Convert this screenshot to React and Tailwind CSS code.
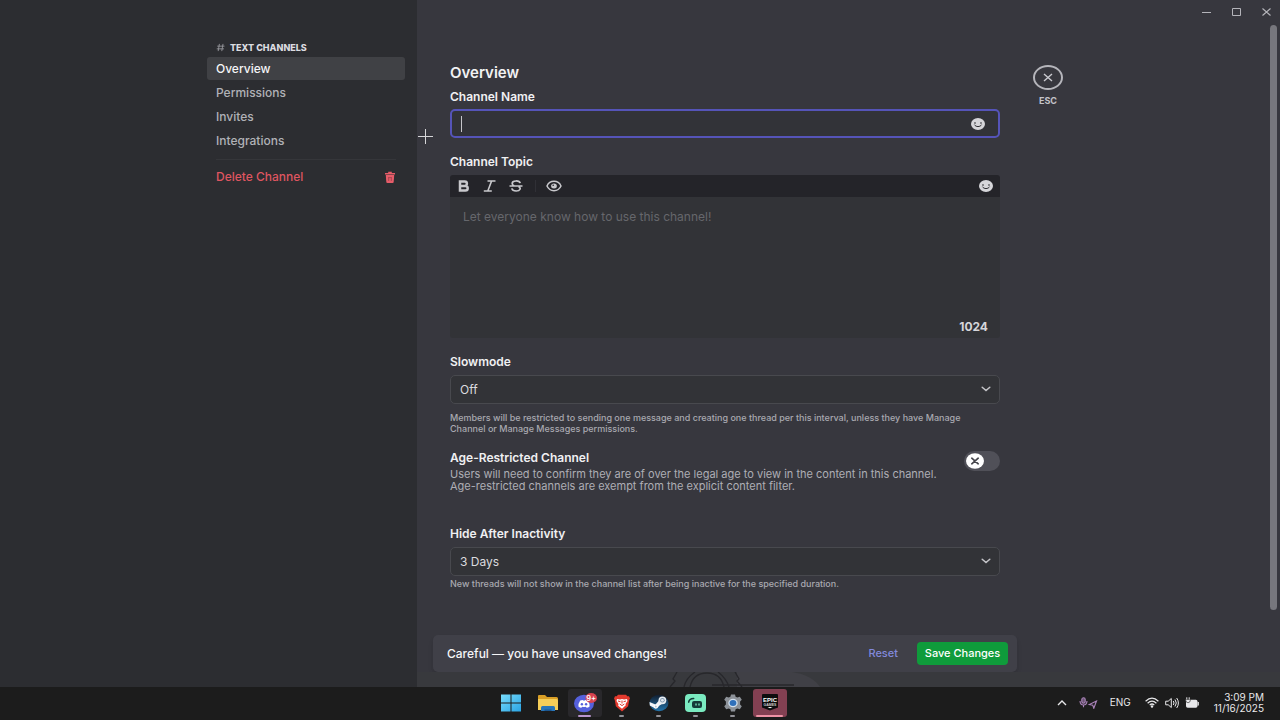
import React, { useState } from "react";

function Smiley() {
  return (
    <svg viewBox="0 0 14 12" className="h-3 w-3.5" aria-hidden="true">
      <ellipse cx="7" cy="6" rx="7" ry="6" fill="#d6d6da" />
      <ellipse cx="4" cy="5" rx="0.9" ry="0.7" fill="#303035" />
      <ellipse cx="10" cy="5" rx="0.9" ry="0.7" fill="#303035" />
      <path d="M3.6 7c1.200 2.200 5.600 2.200 6.800 0" fill="none" stroke="#303035" strokeWidth="1" strokeLinecap="round" />
    </svg>
  );
}

function Chevron() {
  return (
    <svg viewBox="0 0 10 6" className="pointer-events-none absolute right-[9px] top-[11px] h-1.5 w-2.5" aria-hidden="true">
      <path d="M1.2 1.2 5 4.6 8.8 1.2" fill="none" stroke="#c4c4c8" strokeWidth="1.5" strokeLinecap="round" />
    </svg>
  );
}

function Sidebar() {
  const link = "flex h-[23px] items-center rounded-[3px] px-[9px] text-xs font-medium";
  return (
    <aside className="flex w-[417px] shrink-0 justify-end bg-[#2c2d31] pr-3 pt-[41px]">
      <nav className="w-[198px]">
        <h2 className="flex h-[13px] items-center gap-[5px] pl-[9px] text-[9px] font-extrabold text-[#dcdce0]">
          <svg viewBox="0 0 10 10" className="size-[9px]" aria-hidden="true">
            <path d="M3.8 1 2.4 9M7.8 1 6.4 9M1.4 3.5h8M.8 6.5h8" fill="none" stroke="#97979d" strokeWidth="1" />
          </svg>
          TEXT CHANNELS
        </h2>
        <ul className="mt-[3px] flex flex-col gap-px text-[#b1b2b7]">
          <li><a href="#overview" className={link + " bg-[#404145] text-[#f5f5f7]"}>Overview</a></li>
          <li><a href="#permissions" className={link}>Permissions</a></li>
          <li><a href="#invites" className={link}>Invites</a></li>
          <li><a href="#integrations" className={link}>Integrations</a></li>
        </ul>
        <hr className="mx-[9px] mb-[5px] mt-[7px] border-[#35363a]" />
        <button type="button" className="flex h-[23px] w-full items-center justify-between px-[9px] text-xs font-medium text-[#df5560]">
          Delete Channel
          <svg viewBox="0 0 12 12" className="size-3" aria-hidden="true">
            <path d="M4.2.8h3.6v1.1H11v1.5H1V1.9h3.2z" fill="#e65c69" />
            <path d="M1.8 4h8.4l-.5 7q-.1 1-1 1H3.3q-.9 0-1-1z" fill="#e65c69" />
            <path d="M4.7 6v4M7.3 6v4M4.7 6.6h2.6" stroke="#a3434e" strokeWidth="0.9" />
          </svg>
        </button>
      </nav>
    </aside>
  );
}

function SelectField({ id, label, options }) {
  return (
    <>
      <label htmlFor={id} className="block text-xs leading-4 font-semibold text-[#f0f0f2]">{label}</label>
      <div className="relative mt-[5px]">
        <select id={id} className="block h-[29px] w-full appearance-none rounded-[5px] border border-[#48494e] bg-[#323337] px-[9px] text-xs text-[#dbdbdf] outline-none">
          {options.map((o) => <option key={o}>{o}</option>)}
        </select>
        <Chevron />
      </div>
    </>
  );
}

function Toolbar() {
  return (
    <div className="flex h-[22px] items-center rounded-t-[3px] bg-[#242429] px-[7px]">
      <button type="button" aria-label="Bold" className="flex w-[13px] justify-center">
        <svg viewBox="0 0 12 12" className="size-3"><path d="M2 1.500h4.700a2.200 2.200 0 0 1 0 4.400H2zM2 5.900h5.400a2.300 2.300 0 0 1 0 4.600H2z" fill="none" stroke="#c8c8cc" strokeWidth="2.500" /></svg>
      </button>
      <button type="button" aria-label="Italic" className="ml-[13px] flex w-[13px] justify-center">
        <svg viewBox="0 0 13 12" className="h-3 w-[13px]"><path d="M4.5 1h8M.8 11h8M8.6 1 4.8 11" fill="none" stroke="#c8c8cc" strokeWidth="1.6" /></svg>
      </button>
      <button type="button" aria-label="Strikethrough" className="ml-[13px] flex w-3.5 justify-center">
        <svg viewBox="0 0 14 12" className="h-3 w-3.5"><path d="M11.2 3.2C10.6.2 3.2.2 3.2 3.4c0 1 .7 1.9 2 2.3M.5 6h13M9.5 6.6c3 1.2 1.8 4.4-2.3 4.4-2.4 0-4-1-4.4-2.6" fill="none" stroke="#c8c8cc" strokeWidth="1.7" /></svg>
      </button>
      <span className="ml-3 h-3 w-px bg-[#303036]" />
      <button type="button" aria-label="Preview" className="ml-2.5 flex">
        <svg viewBox="0 0 16 12" className="h-3 w-4"><path d="M1 6c2.800-6.200 11.200-6.200 14 0-2.800 6.200-11.200 6.200-14 0z" fill="none" stroke="#c8c8cc" strokeWidth="1.500" /><ellipse cx="8" cy="6" rx="2.900" ry="2.500" fill="#c8c8cc" /><circle cx="7.200" cy="5.200" r=".8" fill="#242429" /></svg>
      </button>
      <button type="button" aria-label="Add emoji to topic" className="ml-auto"><Smiley /></button>
    </div>
  );
}

function Settings() {
  const [name, setName] = useState("");
  const [restricted, setRestricted] = useState(false);
  return (
    <form className="w-full max-w-[550px] pt-[39px]" onSubmit={(e) => e.preventDefault()}>
      <h1 className="text-[15px] leading-[18px] font-semibold text-[#f2f2f4]">Overview</h1>
      <label htmlFor="name" className="mt-[7px] block text-xs leading-4 font-semibold text-[#f0f0f2]">Channel Name</label>
      <div className="relative mt-1 flex h-[29px] items-center rounded-[5px] border-2 border-[#5554b8] bg-[#323338] pl-[9px] pr-[13px]">
        <span className="absolute left-[9px] top-[5px] h-4 w-px bg-[#c6c6ca]" />
        <input id="name" value={name} onChange={(e) => setName(e.target.value)} className="h-full min-w-0 flex-1 bg-transparent text-xs text-white caret-transparent outline-none" />
        <button type="button" aria-label="Add emoji to name"><Smiley /></button>
      </div>
      <label htmlFor="topic" className="mt-4 block text-xs leading-4 font-semibold text-[#f0f0f2]">Channel Topic</label>
      <div className="mt-[5px]">
        <Toolbar />
        <div className="flex h-[141px] flex-col rounded-b-[3px] bg-[#323337] pb-[5px]">
          <textarea id="topic" placeholder="Let everyone know how to use this channel!" className="flex-1 resize-none bg-transparent px-[13px] pt-3 text-xs leading-4 text-[#dbdbdf] outline-none placeholder:text-[#66676c]" />
          <span className="self-end pr-3 text-xs leading-3 font-bold text-[#d6d6da]">1024</span>
        </div>
      </div>
      <div className="mt-4">
        <SelectField id="slow" label="Slowmode" options={["Off", "5 seconds", "10 seconds"]} />
        <p className="mt-2 max-w-[520px] text-[9px] leading-[11px] font-medium text-[#a9a9b0]">
          Members will be restricted to sending one message and creating one thread per this interval, unless they have Manage Channel or Manage Messages permissions.
        </p>
      </div>
      <div className="mt-4 flex items-start justify-between">
        <div>
          <label htmlFor="age" className="block text-xs leading-4 font-semibold text-[#f0f0f2]">Age-Restricted Channel</label>
          <p className="mt-0.5 max-w-[495px] text-[11px] leading-3 text-[#aeaeb5]">
            Users will need to confirm they are of over the legal age to view in the content in this channel. Age-restricted channels are exempt from the explicit content filter.
          </p>
        </div>
        <label className="mt-px flex h-5 w-9 items-center rounded-full bg-[#505058] px-0.5 has-[:checked]:justify-end has-[:checked]:bg-[#0f9b3b]">
          <input id="age" type="checkbox" role="switch" checked={restricted} onChange={(e) => setRestricted(e.target.checked)} className="sr-only" />
          <svg viewBox="0 0 18 16" className="h-4 w-[18px]" aria-hidden="true">
            <ellipse cx="9" cy="8" rx="9" ry="7.8" fill="#fff" />
            <path d="m5.8 5.2 6.4 5.6m0-5.6-6.4 5.6" stroke="#46464c" strokeWidth="1.7" strokeLinecap="round" />
          </svg>
        </label>
      </div>
      <div className="mt-[34px]">
        <SelectField id="hide" label="Hide After Inactivity" options={["3 Days", "1 Week", "1 Hour"]} />
        <p className="mt-0.5 text-[9px] leading-[11px] font-medium text-[#a9a9b0]">
          New threads will not show in the channel list after being inactive for the specified duration.
        </p>
      </div>
    </form>
  );
}

function WindowControls() {
  return (
    <div className="flex h-[25px] items-center justify-end gap-[19px] pb-0.5 pr-2 text-[#b4b4ba]">
      <button type="button" aria-label="Minimize"><svg viewBox="0 0 11 10" className="h-2.5 w-[11px]"><path d="M1 5.5h9" stroke="currentColor" strokeWidth="1" /></svg></button>
      <button type="button" aria-label="Maximize"><svg viewBox="0 0 11 10" className="h-2.5 w-[11px]"><path d="M1.5 1.5h8v7h-8z" fill="none" stroke="currentColor" strokeWidth="1" /></svg></button>
      <button type="button" aria-label="Close window"><svg viewBox="0 0 11 10" className="h-2.5 w-[11px]"><path d="m1.5 1.5 8 7m0-7-8 7" stroke="currentColor" strokeWidth="1.1" /></svg></button>
    </div>
  );
}

function UnsavedBar() {
  return (
    <div className="ml-4 flex h-[37px] max-w-[584px] items-center rounded-[5px] bg-[#404048] pl-3.5 pr-[9px] shadow-md">
      <span className="flex-1 text-xs font-medium text-[#f6f6f8]">Careful — you have unsaved changes!</span>
      <button type="button" className="mr-[19px] text-[11px] font-medium text-[#8289dc]">Reset</button>
      <button type="button" className="h-[23px] w-[91px] rounded-[4px] bg-[#0f9b3b] text-[11px] font-medium text-white">Save Changes</button>
    </div>
  );
}

function Task({ name, slot = "", mark = "", children }) {
  return (
    <button type="button" aria-label={name} className={"relative flex h-7 w-[34px] items-center justify-center rounded-[3px] " + slot}>
      {children}
      <span className={"absolute bottom-0 h-0.5 rounded-full " + mark} />
    </button>
  );
}

function Taskbar() {
  const dot = "w-[5px] bg-[#929298]";
  return (
    <footer className="grid h-[33px] grid-cols-[1fr_auto_1fr] items-center bg-[#1c1c1c] pb-0.5">
      <div className="col-start-2 flex gap-[3px]">
        <Task name="Start">
          <svg viewBox="0 0 20 18" className="h-[18px] w-5">
            <defs><linearGradient id="win" x2="1" y2="1"><stop stopColor="#78dcfb" /><stop offset="1" stopColor="#2aa4e4" /></linearGradient></defs>
            <path d="M0 .5h9.5v8H0zM10.5.5H20v8h-9.5zM0 9.5h9.5v8H0zM10.5 9.5H20v8h-9.5z" fill="url(#win)" />
          </svg>
        </Task>
        <Task name="File Explorer">
          <svg viewBox="0 0 22 18" className="h-[18px] w-[22px]">
            <path d="M1 2q0-1 1-1h6l2 2h9.500q1.500 0 1.500 1.500V9H1z" fill="#d99f26" />
            <path d="M1 5h18.500q1.500 0 1.500 1.500V16H1z" fill="#f5ce58" />
            <path d="M4 17v-3.500Q4 12 5.500 12h11q1.500 0 1.500 1.500V17z" fill="#2875b8" />
            <path d="M7.500 17v-1.500h7V17" fill="#1b568f" />
          </svg>
        </Task>
        <Task name="Discord" slot="bg-[#29282b]" mark="w-[13px] bg-[#b995ce]">
          <svg viewBox="0 0 24 20" className="h-5 w-6">
            <ellipse cx="11" cy="10.500" rx="10" ry="8.700" fill="#5560dc" />
            <path d="M7.200 7.600q1.200-.7 2.500-.7l.4.7h1.800l.4-.7q1.300 0 2.500.7 2 3 1.800 6-1.500 1.200-3 1.200l-.7-1q-1.900.4-3.800 0l-.7 1q-1.500 0-3-1.200-.2-3 1.800-6z" fill="#fff" />
            <ellipse cx="8.900" cy="11.200" rx="1.200" ry="1.300" fill="#5560dc" /><ellipse cx="13.100" cy="11.200" rx="1.200" ry="1.300" fill="#5560dc" />
            <ellipse cx="18.200" cy="5" rx="5.800" ry="5" fill="#d8434f" />
            <text x="18.200" y="7.700" textAnchor="middle" fontSize="7.500" fontWeight="600" fill="#fff" fontFamily="Inter, sans-serif">9+</text>
          </svg>
        </Task>
        <Task name="Brave" mark={dot}>
          <svg viewBox="0 0 18 18" className="size-[18px]">
            <path d="M5 .7h8l1.300 1.600 1.700-.1 1 2.200-.7 1.400-1.200 6.400L9 17.500l-6.100-5.300L1.700 5.800 1 4.400l1-2.200 1.700.1z" fill="#e33a2e" />
            <path d="m4 5 3 .5L9 5l2 .5 3-.5.5 2-2 3 .3 1.300L9 14.800l-3.800-3L5.500 10l-2-3z" fill="#fff" />
            <path d="m5 7 2.500.7M13 7l-2.500.7M9 6.500v3M6.700 10 9 11.600l2.300-1.600" fill="none" stroke="#df3b2f" strokeWidth="1" />
          </svg>
        </Task>
        <Task name="Steam" mark={dot}>
          <svg viewBox="0 0 20 18" className="h-[18px] w-5">
            <defs><linearGradient id="stm" x2="0" y2="1"><stop stopColor="#111d2e" /><stop offset="1" stopColor="#2375ac" /></linearGradient></defs>
            <ellipse cx="10" cy="9" rx="9.500" ry="8.300" fill="url(#stm)" />
            <path d="m.5 8 6 2.500L10 6.500 15.500 8.500l-5 3-2.300 2.700q-2.200 1.200-3.700-.7L.8 11.500z" fill="#f2f4f7" />
            <circle cx="13.400" cy="6.300" r="3.900" fill="#e8edf1" /><circle cx="13.400" cy="6.300" r="2.300" fill="#7d96ae" /><circle cx="13.400" cy="6.300" r="1.400" fill="#e2e8ee" />
            <circle cx="6.800" cy="12.400" r="1.900" fill="#fff" /><circle cx="6.800" cy="12.400" r="1" fill="#bac7d2" />
          </svg>
        </Task>
        <Task name="Streamlabs" mark={dot}>
          <svg viewBox="0 0 21 18" className="h-[18px] w-[21px]">
            <rect width="21" height="18" rx="4" fill="#7aeac0" />
            <rect x="7" y="7" width="10" height="7" rx="2" fill="#153a38" />
            <path d="M3.700 8.200q.4-3.500 5-3.700" fill="none" stroke="#153a38" strokeWidth="1.500" strokeLinecap="round" />
            <path d="M11 9.500v2M14 9.500v2" stroke="#7aeac0" strokeWidth="1.300" />
          </svg>
        </Task>
        <Task name="Settings" mark={dot}>
          <svg viewBox="0 0 20 18" className="h-[18px] w-5">
            <path d="M8 .5h4l.6 2.300 1.700.8 2.500-.8 2 3-1.700 1.700v3l1.700 1.700-2 3-2.500-.8-1.700.8-.6 2.300H8l-.6-2.300-1.700-.8-2.500.8-2-3 1.700-1.700v-3L1.200 5.800l2-3 2.500.8 1.700-.8z" fill="#8d9298" />
            <ellipse cx="10" cy="9" rx="4.700" ry="4.300" fill="#d2e0ed" /><ellipse cx="10" cy="9" rx="3.400" ry="3" fill="#2f70ba" />
          </svg>
        </Task>
        <Task name="Epic Games" slot="bg-[#834052]" mark="w-[27px] bg-[#ee92a5]">
          <svg viewBox="0 0 18 18" className="mb-0.5 size-[18px]">
            <path d="M1 2q0-1 1-1h14q1 0 1 1v12.500L9 17.500 1 14.500z" fill="#0d0d0e" />
            <text x="9" y="8.500" textAnchor="middle" fontSize="6" fontWeight="700" fill="#fff" fontFamily="Liberation Sans Narrow, Liberation Sans, sans-serif">EPIC</text>
            <text x="9" y="12.500" textAnchor="middle" fontSize="3.500" fontWeight="700" fill="#ccc" fontFamily="Liberation Sans, sans-serif">GAMES</text>
            <path d="M6.500 14h5L9 15.300z" fill="#fff" />
          </svg>
        </Task>
      </div>
      <div className="flex items-center justify-end pr-4 text-[#e8e8ea]">
        <svg viewBox="0 0 10 6" className="h-1.5 w-2.5" aria-hidden="true"><path d="m1 5 4-4 4 4" fill="none" stroke="currentColor" strokeWidth="1.400" /></svg>
        <svg viewBox="0 0 19 12" className="ml-3 h-3 w-[19px]" aria-hidden="true">
          <g fill="none" stroke="#ab83ba" strokeWidth="1.100"><rect x="2.800" y=".8" width="3.400" height="5.500" rx="1.700" fill="#6b5474" /><path d="M1 4q.2 4 3.500 4T8 4M4.500 8v2.200M17.500 4 10.300 7.500l3.500.8 1 3z" /></g>
        </svg>
        <span className="ml-3 text-[10px]">ENG</span>
        <svg viewBox="0 0 14 11" className="ml-3.5 h-[11px] w-3.5" aria-hidden="true">
          <g fill="none" stroke="currentColor" strokeWidth="1.200"><path d="M.6 4.200q6.400-6 12.800 0M2.600 6.200q4.400-4.200 8.800 0M4.700 8.100q2.300-2.200 4.600 0" /></g><circle cx="7" cy="9.500" r="1.200" fill="currentColor" />
        </svg>
        <svg viewBox="0 0 14 12" className="ml-1.5 h-3 w-3.5" aria-hidden="true">
          <path d="M.7 4.200h2.500L6.300 1.500v9L3.200 7.800H.7zM8.300 4q1.400 2 0 4M10 2.500q2.600 3.500 0 7M11.700 1q3.400 5 0 10" fill="none" stroke="currentColor" strokeWidth="1" />
        </svg>
        <svg viewBox="0 0 14 12" className="ml-1.5 h-3 w-3.5" aria-hidden="true">
          <rect x="1" y="2.800" width="11.500" height="8" rx="1.700" fill="currentColor" /><path d="M13.200 5v3.500" stroke="currentColor" strokeWidth="1.300" />
          <path d="M.5 2.500h5q0 3-2.500 3.300Q.5 5.500.5 2.500z" fill="currentColor" stroke="#1c1c1c" strokeWidth=".6" /><path d="M1.800.3v2.200M4.200.3v2.200" stroke="currentColor" />
        </svg>
        <div className="ml-[15px] text-right text-[10px] leading-[11px]"><div>3:09 PM</div><div>11/16/2025</div></div>
      </div>
    </footer>
  );
}

export default function App() {
  return (
    <div className="flex min-h-screen flex-col bg-[#37373e] font-['Inter','Noto_Sans',sans-serif]">
      <div className="relative flex flex-1">
        <Sidebar />
        <main className="flex min-w-0 flex-1 flex-col">
          <WindowControls />
          <div className="flex flex-1">
            <div className="flex min-w-0 flex-1 flex-col">
              <div className="flex flex-1 items-start gap-[33px] pl-[33px]">
                <Settings />
                <div className="flex w-[30px] shrink-0 flex-col items-center pt-10">
                  <button type="button" aria-label="Close settings" className="flex h-[25px] w-[30px] items-center justify-center rounded-[50%] border-2 border-[#b5b5bb]">
                    <svg viewBox="0 0 10 9" className="h-[9px] w-2.5"><path d="m1 1 8 7m0-7L1 8" stroke="#cacad0" strokeWidth="1.400" /></svg>
                  </button>
                  <span className="mt-[5px] text-[9px] leading-3 font-bold text-[#c3c3c9]">ESC</span>
                </div>
              </div>
              <UnsavedBar />
            </div>
            <div className="mb-[62px] mr-[3px] w-[7px] rounded-full bg-[#77777d]" />
          </div>
          <div className="h-[15px] bg-[#38393d]">
            <svg viewBox="0 0 160 15" className="ml-[250px] h-[15px] w-40" aria-hidden="true">
              <path d="M70 0h55q20 3 28 15H70z" fill="#404046" />
              <g fill="none" stroke="#27272b" strokeWidth="1.300"><path d="M10 0 6 7l2 2-5 6M68 0l4 7-2 2 5 6M17 15q2-9 11-15M62 15Q59 6 51 0M23 15Q26 1 40 1t17 14M45 13h82" /></g>
            </svg>
          </div>
        </main>
        <svg viewBox="0 0 15 15" className="absolute left-[418px] top-[129px] size-[15px]" aria-hidden="true"><path d="M7.500 0v15M0 7.500h15" stroke="#d5d5d8" strokeWidth="1" /></svg>
      </div>
      <Taskbar />
    </div>
  );
}
